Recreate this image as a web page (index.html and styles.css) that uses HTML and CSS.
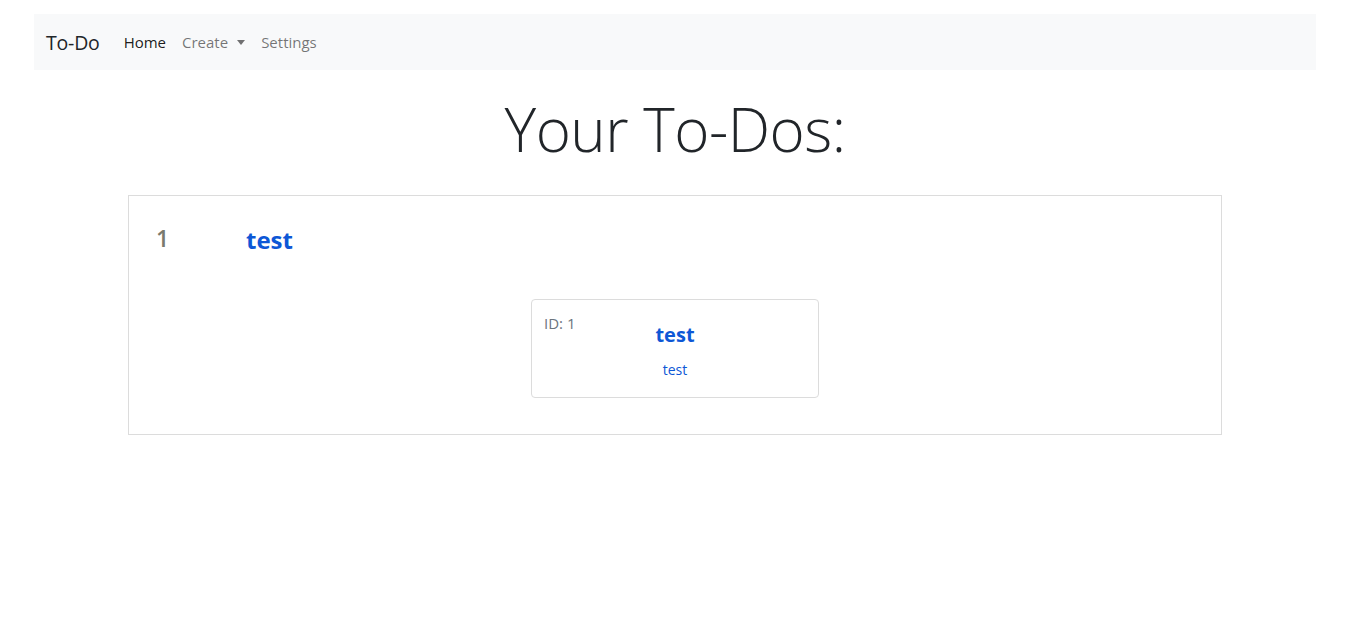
FILE: index.html
```html
<!DOCTYPE html>
<html lang="en">
<head>
<meta charset="utf-8">
<title>To-Do</title>
<link rel="stylesheet" href="styles.css">
</head>
<body>
<div class="page">
  <nav class="navbar">
    <a class="brand" href="#">To-Do</a>
    <ul class="nav">
      <li><a class="nav-link active" href="#">Home</a></li>
      <li><a class="nav-link" href="#">Create <span class="caret"></span></a></li>
      <li><a class="nav-link" href="#">Settings</a></li>
    </ul>
  </nav>
  <h1 class="title">Your To-Dos:</h1>
  <section class="list">
    <div class="item-row">
      <span class="item-num">1</span>
      <a class="item-title" href="#">test</a>
    </div>
    <div class="card-wrap">
      <div class="card">
        <span class="card-id">ID: 1</span>
        <a class="card-title" href="#">test</a>
        <a class="card-text" href="#">test</a>
      </div>
    </div>
  </section>
</div>
</body>
</html>
```

FILE: styles.css
```css
* { box-sizing: border-box; }
body {
  margin: 0;
  font-family: "Open Sans", "Noto Sans", sans-serif;
  color: #212529;
  background: #fff;
}
a { text-decoration: none; }
.page {
  padding: 14px 34px 0 34px;
}
.navbar {
  display: flex;
  align-items: center;
  height: 56px;
  background: #f8f9fa;
  padding: 0 12px;
}
.brand {
  font-size: 19.5px;
  color: #212529;
  margin-right: 16px;
  letter-spacing: -0.2px;
}
.nav {
  display: flex;
  list-style: none;
  margin: 0;
  padding: 0;
  gap: 0;
}
.nav-link {
  display: flex;
  align-items: center;
  font-size: 15px;
  color: rgba(0,0,0,.55);
  padding: 8px 8px;
}
.nav-link.active { color: rgba(0,0,0,.9); }
.caret {
  display: inline-block;
  margin-left: 9px;
  border-top: 5px solid rgba(0,0,0,.55);
  border-left: 4.5px solid transparent;
  border-right: 4.5px solid transparent;
}
.title {
  text-align: center;
  font-weight: 300;
  font-size: 60px;
  line-height: 1.2;
  margin: 23px 0 0 0;
  letter-spacing: -0.5px;
}
.list {
  margin: 30px 94px 0 94px;
  border: 1px solid #dcdcdc;
  padding: 25px 27px 36px 27px;
}
.item-row {
  display: flex;
  align-items: baseline;
}
.item-num {
  font-size: 23px;
  font-weight: 600;
  color: #7a7a6e;
  width: 90px;
}
.item-title {
  font-size: 24px;
  font-weight: 700;
  color: #0d57d6;
  position: relative;
  top: 2px;
}
.card-wrap {
  display: flex;
  justify-content: center;
  margin-top: 45px;
}
.card {
  width: 288px;
  height: 99px;
  border: 1px solid #dcdcdc;
  border-radius: 4px;
  display: grid;
  grid-template-columns: 1fr;
  align-content: start;
  justify-items: center;
  padding: 14px 12px 0 12px;
  position: relative;
}
.card-id {
  position: absolute;
  left: 12px;
  top: 13px;
  font-size: 15px;
  color: #6c757d;
}
.card-title {
  font-size: 20px;
  font-weight: 700;
  color: #0d57d6;
  margin-top: 9px;
  line-height: 1.2;
}
.card-text {
  font-size: 14px;
  color: #0d57d6;
  margin-top: 13px;
}
```
